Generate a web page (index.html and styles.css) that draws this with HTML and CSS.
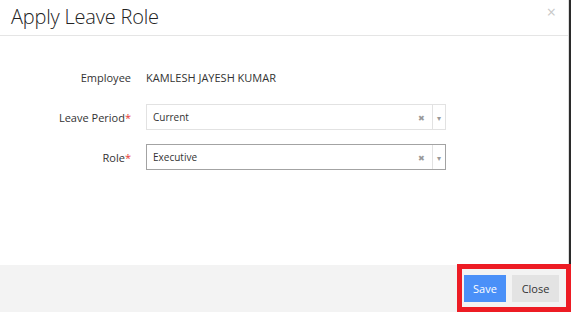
FILE: index.html
```html
<!DOCTYPE html>
<html lang="en">
<head>
    <meta charset="UTF-8">
    <meta name="viewport" content="width=device-width, initial-scale=1.0">
    <title>Apply Leave Role</title>
    <link rel="stylesheet" href="styles.css">
</head>
<body>
    <div class="modal">
        <div class="modal-header">
            <h3>Apply Leave Role</h3>
            <span class="modal-close">&times;</span>
        </div>

        <div class="modal-body">
            <div class="form-row">
                <label>Employee</label>
                <div class="form-value">KAMLESH JAYESH KUMAR</div>
            </div>
            <div class="form-row">
                <label>Leave Period<span class="req">*</span></label>
                <div class="select-box">
                    <span class="select-text">Current</span>
                    <span class="select-clear">&#x2716;</span>
                    <span class="select-arrow">&#x25BE;</span>
                </div>
            </div>
            <div class="form-row">
                <label>Role<span class="req">*</span></label>
                <div class="select-box focused">
                    <span class="select-text">Executive</span>
                    <span class="select-clear">&#x2716;</span>
                    <span class="select-arrow">&#x25BE;</span>
                </div>
            </div>
        </div>

        <div class="modal-footer">
            <div class="button-group">
                <button type="button" class="btn-save">Save</button>
                <button type="button" class="btn-close">Close</button>
            </div>
            <div class="highlight"></div>
        </div>
    </div>
</body>
</html>
```

FILE: styles.css
```css
* {
    box-sizing: border-box;
}

html, body {
    margin: 0;
    height: 100%;
}

body {
    background: #2b2b2b;
    font-family: "Open Sans", "Liberation Sans", sans-serif;
    color: #333;
}

.modal {
    width: 569px;
    height: 312px;
    background: #fff;
    border-right: 1px solid #ddd;
    display: flex;
    flex-direction: column;
    position: relative;
}

.modal-header {
    height: 36px;
    border-bottom: 1px solid #e5e5e5;
    display: flex;
    align-items: center;
    justify-content: space-between;
    padding: 0 12px 0 11px;
}

.modal-header h3 {
    margin: 0;
    font-size: 20px;
    font-weight: 300;
    color: #222;
    letter-spacing: -0.2px;
    margin-top: -3px;
}

.modal-close {
    font-size: 16px;
    color: #c8c8c8;
    margin-top: -12px;
}

.modal-body {
    flex: 1;
    padding-top: 28px;
    display: flex;
    flex-direction: column;
    gap: 14px;
}

.form-row {
    display: grid;
    grid-template-columns: 131px 300px;
    column-gap: 15px;
    align-items: center;
    height: 26px;
}

.form-row label {
    text-align: right;
    font-size: 11px;
    color: #333;
}

.req {
    color: #e53935;
}

.form-value {
    font-size: 11px;
    color: #333;
}

.select-box {
    height: 26px;
    border: 1px solid #e2e2e2;
    display: flex;
    align-items: center;
    font-size: 10px;
    color: #333;
}

.select-box.focused {
    border-color: #a3a3a3;
}

.select-text {
    flex: 1;
    padding-left: 6px;
}

.select-clear {
    font-size: 8px;
    color: #999;
    width: 14px;
}

.select-arrow {
    width: 13px;
    height: 24px;
    border-left: 1px solid #e2e2e2;
    font-size: 8px;
    color: #999;
    display: flex;
    align-items: center;
    justify-content: center;
}

.modal-footer {
    height: 47px;
    background: #f3f3f3;
    display: flex;
    justify-content: flex-end;
    align-items: flex-start;
    padding: 10px 9px 0 0;
    position: relative;
}

.button-group {
    display: flex;
    gap: 6px;
}

.button-group button {
    height: 27px;
    border: none;
    font-family: "Open Sans", "Liberation Sans", sans-serif;
    font-size: 11px;
    padding: 0;
}

.btn-save {
    width: 42px;
    background: #4a90f8;
    color: #fff;
}

.btn-close {
    width: 47px;
    background: #e3e3e3;
    color: #333;
}

/* annotation box drawn over the footer buttons */
.highlight {
    position: absolute;
    left: 457px;
    top: -1px;
    width: 114px;
    height: 48px;
    border: 5px solid #ed1c24;
}
```
